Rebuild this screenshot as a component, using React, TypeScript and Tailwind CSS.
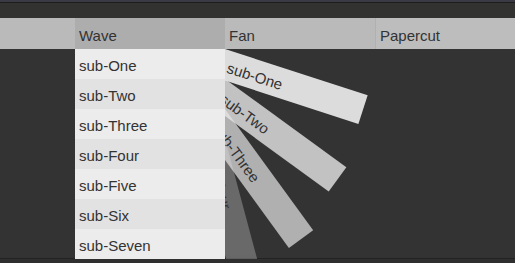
export default function App() {
  const subs = ['sub-One', 'sub-Two', 'sub-Three', 'sub-Four', 'sub-Five', 'sub-Six', 'sub-Seven']

  // fan blades: rotation grows by ~18deg, later ones still fading in
  const fan = [
    { label: 'sub-One', cls: 'rotate-[18deg] opacity-95' },
    { label: 'sub-Two', cls: 'rotate-[36deg] opacity-80' },
    { label: 'sub-Three', cls: 'rotate-[54deg] opacity-70' },
    { label: 'sub-Four', cls: 'rotate-[75deg] opacity-30' },
  ]

  return (
    <div className="w-[515px] h-[263px] bg-[#2f2f2f] overflow-hidden font-['Liberation_Sans',Arial,sans-serif] text-[15px] text-[#333]">
      {/* top strip */}
      <div className="h-[2px] bg-[#3a3a44]" />
      <div className="h-px bg-[#1c1c1c]" />
      <div className="h-[15px] bg-[#323230]" />

      {/* nav */}
      <div className="relative z-10 flex h-[31px] bg-[#bababa]">
        <div className="w-[75px] shrink-0" />

        {/* Wave */}
        <div className="relative w-[150px] shrink-0 bg-[#adadad] pl-1 pt-1 leading-[27px]">
          Wave
          <div className="absolute left-0 top-full z-20 w-[150px]">
            {subs.map((s, i) => (
              <div
                key={s}
                className={`h-[30px] pl-1 pt-1 leading-[26px] ${i % 2 === 0 ? 'bg-[#ececec]' : 'bg-[#e2e2e2]'}`}
              >
                {s}
              </div>
            ))}
          </div>
        </div>

        {/* Fan */}
        <div className="relative w-[150px] shrink-0 pl-1 pt-1 leading-[27px]">
          Fan
          <div className="absolute left-0 top-full h-[210px] w-[300px] overflow-hidden">
            <div className="flex flex-col">
              {fan.map((f) => (
                <div
                  key={f.label}
                  className={`h-[30px] w-[150px] origin-top-left bg-[#e6e6e6] pl-2 pt-1 leading-[26px] ${f.cls}`}
                >
                  {f.label}
                </div>
              ))}
            </div>
          </div>
        </div>

        {/* Papercut */}
        <div className="w-[150px] shrink-0 border-l border-[#b0b0b0] bg-[#bdbdbd] pl-1 pt-1 leading-[27px]">
          Papercut
        </div>
      </div>

      {/* content */}
      <div className="h-[210px] bg-[#333333] border-b border-[#232323]" />
    </div>
  )
}
